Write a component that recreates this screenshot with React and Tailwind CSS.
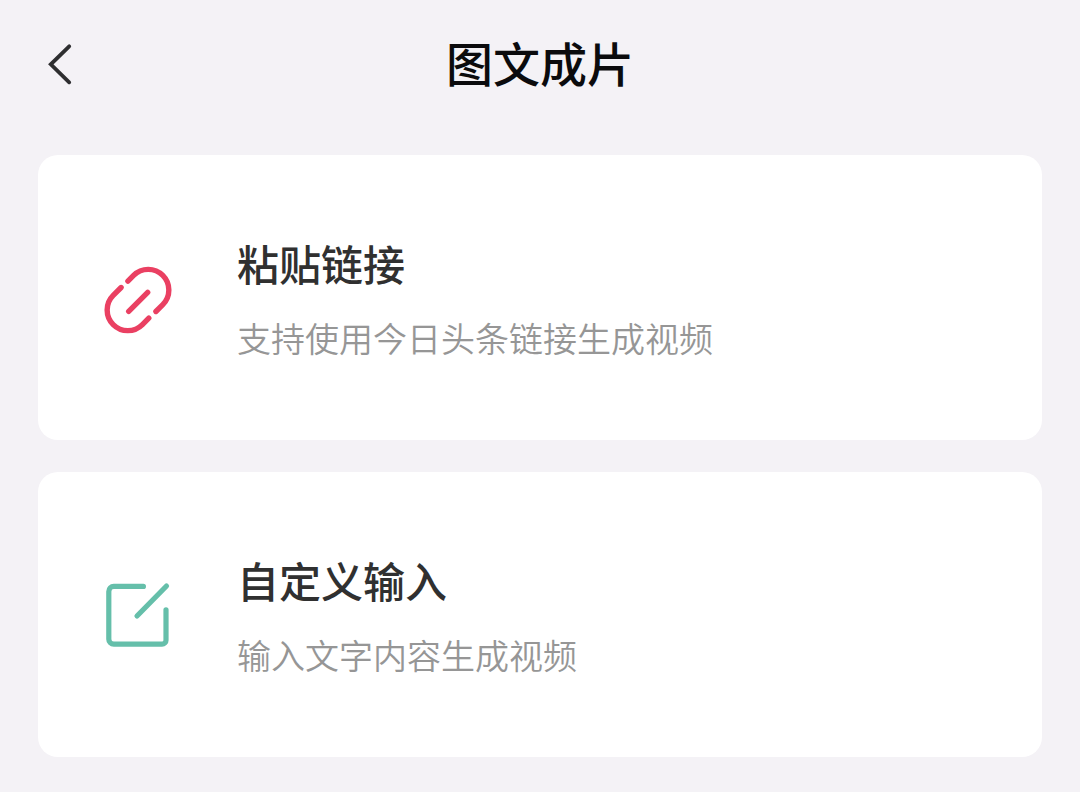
function BackIcon() {
  return (
    <svg
      viewBox="0 0 32 48"
      className="w-8 h-12"
      fill="none"
      stroke="currentColor"
      strokeWidth="3.8"
      aria-hidden="true"
    >
      <path d="M25.2 8.3 L6.8 26.3 L25.2 44.3" strokeLinecap="round" />
    </svg>
  );
}

function LinkIcon() {
  return (
    <svg
      viewBox="0 0 72 72"
      className="w-[72px] h-[72px]"
      fill="none"
      stroke="currentColor"
      strokeWidth="5.4"
      strokeLinecap="round"
      aria-hidden="true"
    >
      <path d="M25.9 18.1 L31.6 12.4 A20.6 20.6 0 0 1 60.8 41.6 L53.9 48.5" />
      <path d="M19.1 24.5 L11.2 32.4 A20.6 20.6 0 0 0 40.4 61.6 L46.8 55.2" />
      <path d="M26.7 48.3 L45.7 29.3" />
    </svg>
  );
}

function EditIcon() {
  return (
    <svg
      viewBox="0 0 72 72"
      className="w-[72px] h-[72px]"
      fill="none"
      stroke="currentColor"
      strokeWidth="5.2"
      strokeLinecap="round"
      aria-hidden="true"
    >
      <path d="M41.4 6.4 H11.8 A5 5 0 0 0 6.8 11.4 V59.2 A5 5 0 0 0 11.8 64.2 H60 A4 4 0 0 0 64 60.2 V29.8" />
      <path d="M64.5 6 L35 36" />
    </svg>
  );
}

const options = [
  {
    icon: <LinkIcon />,
    color: "text-[#ea4062]",
    title: "粘贴链接",
    desc: "支持使用今日头条链接生成视频",
  },
  {
    icon: <EditIcon />,
    color: "text-[#65bfaa]",
    title: "自定义输入",
    desc: "输入文字内容生成视频",
  },
];

export default function App() {
  return (
    <div className="min-h-screen bg-[#f4f2f6] font-['Noto_Sans_CJK_SC',sans-serif]">
      {/* HEADER */}
      <header className="grid grid-cols-[1fr_auto_1fr] items-center px-11 pt-[27px] pb-[33px]">
        <button type="button" aria-label="返回" className="justify-self-start text-[#2e2e30]">
          <BackIcon />
        </button>
        <h1 className="text-[47px] leading-[70px] font-medium text-[#0b0b0d]">图文成片</h1>
      </header>

      {/* OPTIONS */}
      <main className="flex flex-col gap-8 px-[38px] pt-[25px] pb-[35px]">
        {options.map((option) => (
          <button
            key={option.title}
            type="button"
            className="flex items-center w-full gap-[63px] pl-16 pr-8 pt-20 pb-[77px] rounded-[20px] bg-white text-left"
          >
            <span className={`shrink-0 ${option.color}`}>{option.icon}</span>
            <span className="flex flex-col gap-[22px]">
              <span className="text-[42px] leading-[56px] font-medium text-[#303030]">
                {option.title}
              </span>
              <span className="text-[34px] leading-[50px] font-[350] text-[#969696]">
                {option.desc}
              </span>
            </span>
          </button>
        ))}
      </main>
    </div>
  );
}
